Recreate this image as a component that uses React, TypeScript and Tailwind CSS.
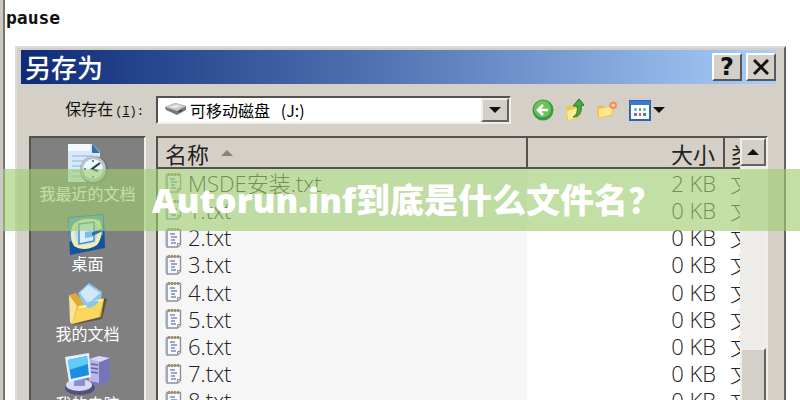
import type { ReactNode } from "react";

type Place = { label: string; icon: ReactNode };

const files = [
  { name: "MSDE安装.txt", size: "2 KB" },
  { name: "1.txt", size: "0 KB" },
  { name: "2.txt", size: "0 KB" },
  { name: "3.txt", size: "0 KB" },
  { name: "4.txt", size: "0 KB" },
  { name: "5.txt", size: "0 KB" },
  { name: "6.txt", size: "0 KB" },
  { name: "7.txt", size: "0 KB" },
  { name: "8.txt", size: "0 KB" },
];

function RecentIcon() {
  return (
    <svg width="44" height="44" viewBox="0 0 44 44" aria-hidden="true">
      <path d="M2 2h24l8 8v30H2z" fill="#d8e8fa" />
      <path d="M2 2h22v7H2z" fill="#f4f9ff" />
      <path d="M26 2l8 9h-8z" fill="#2f6fb5" />
      <path d="M6 14h22M6 19h12M6 24h9M6 29h9M6 34h10" stroke="#b4cdec" strokeWidth="2" />
      <circle cx="28" cy="28" r="14" fill="#686c70" />
      <circle cx="27" cy="27" r="13" fill="#b9c2c8" />
      <circle cx="27" cy="27" r="10" fill="#eef8fc" />
      <path d="M34 21l-8 6 6 2" fill="none" stroke="#23384a" strokeWidth="2" />
      <path d="M27 18v2M18 27h2M27 34v2" stroke="#5b86a0" strokeWidth="2" />
    </svg>
  );
}

function DesktopIcon() {
  return (
    <svg width="44" height="44" viewBox="0 0 44 44" aria-hidden="true">
      <path d="M2 5l36-3 1 34-35 7z" fill="#1553a0" />
      <path d="M3 6l34-3v20L3 30z" fill="#3f92d2" />
      <path d="M7 13c5-7 20-8 27-4 3 8 2 18-3 24-8 5-17 5-23 1-4-6-4-15-1-21z" fill="#f1efb4" />
      <path d="M10 14c6-4 15-5 21-2 2 6 1 13-2 18-6 3-13 3-18 0-3-5-3-11-1-16z" fill="#b9dff0" />
      <path d="M13 12l15-2v19l-15 3z" fill="#d8efff" stroke="#4f8dca" strokeWidth="1.5" />
      <path d="M22 22l13-5 2 2-13 6z" fill="#336f9e" />
      <path d="M19 20l7-1v6l-7 1z" fill="#7bbdf0" />
    </svg>
  );
}

function DocumentsIcon() {
  return (
    <svg width="44" height="44" viewBox="0 0 44 44" aria-hidden="true">
      <path d="M6 43l30-6 5-20-4-1z" fill="#55554d" />
      <path d="M3 13l7-2 4 5 8 1 16-1-3 19-29 7z" fill="#dfa936" />
      <path d="M12 11L23 1l13 9-2 13-15 4z" fill="#8fc4ee" />
      <path d="M14 11l8-8 12 8-12 11z" fill="#cfe9fb" />
      <path d="M3 13l8 11-5 18-2-2z" fill="#f8e49a" />
      <path d="M12 24l9-1 5-4 12-2-5 18-27 7z" fill="#fbd75b" />
      <path d="M13 25l9-1 5-4 9-2" fill="none" stroke="#fff3b0" strokeWidth="2" />
      <path d="M20 22c4-4 8-4 13-3-3 5-8 7-12 7z" fill="#86c8e8" />
    </svg>
  );
}

function ComputerIcon() {
  return (
    <svg width="48" height="44" viewBox="0 0 48 44" aria-hidden="true">
      <path d="M25 7l10-4 11 3v22l-10 6-11-4z" fill="#7774ba" />
      <path d="M25 7l10-3v27l-10-2z" fill="#b9b5e6" />
      <path d="M35 4l11 2-10 4-10-3z" fill="#d9d7f5" />
      <path d="M27 12l7 1M27 16l7 1M27 20l7 1" stroke="#6661a9" strokeWidth="1.5" />
      <ellipse cx="16" cy="36" rx="15" ry="7" fill="#52517e" />
      <ellipse cx="15" cy="33" rx="13" ry="6" fill="#d8daf5" />
      <path d="M10 27h11v7H10z" fill="#8a8fd1" />
      <path d="M1 5l24-4 2 24-22 5z" fill="#e4f2ff" />
      <path d="M4 8l19-4 2 19-18 4z" fill="#1b8ee2" />
      <path d="M4 8l19-4 1 8L5 18z" fill="#63c9f7" />
    </svg>
  );
}

function NotepadIcon() {
  return (
    <svg className="shrink-0" width="17" height="21" viewBox="0 0 17 21" aria-hidden="true">
      <path d="M2 2.5h13.5v15l-3 2.5H2z" fill="#f7f9ff" stroke="#8f9097" strokeWidth="1.4" />
      <path d="M1.5 3v16" stroke="#9aa6bf" strokeWidth="2" />
      <path d="M3 2.5h12" stroke="#a59462" strokeWidth="3" strokeDasharray="2 1" />
      <path d="M5 7h5M6 10h6M6 13h4M6 16h5" stroke="#7f8cb0" strokeWidth="1.3" />
      <path d="M12.5 19.5v-3h3" fill="#d8d8df" stroke="#8f9097" />
    </svg>
  );
}

function DriveIcon() {
  return (
    <svg width="24" height="14" viewBox="0 0 24 14" aria-hidden="true">
      <path d="M1 5l10-4 11 3v4l-9 5L2 8z" fill="#77777a" />
      <path d="M1 5l10-4 11 3-9 5z" fill="#c9c9cc" />
      <path d="M5 5l7-2 5 1-5 2z" fill="#ececef" />
      <path d="M15 10l3-2" stroke="#3c3c3c" strokeWidth="1.5" />
    </svg>
  );
}

function BackIcon() {
  return (
    <svg width="22" height="22" viewBox="0 0 22 22" aria-hidden="true">
      <circle cx="11" cy="11" r="10.5" fill="#3b9c39" />
      <circle cx="10.5" cy="10" r="8.5" fill="#6cc35d" />
      <path d="M16 11H7M11 6l-5 5 5 5" fill="none" stroke="#fff" strokeWidth="2.6" />
    </svg>
  );
}

function UpIcon() {
  return (
    <svg width="20" height="24" viewBox="0 0 20 24" aria-hidden="true">
      <path d="M1 9l5-2 2 2 7-1-1 12-12 3z" fill="#edc94d" />
      <path d="M2 13l10-3-1 10-8 2z" fill="#fbed91" />
      <path d="M8 19c4-2 5-6 4-11H8l6-7 5 6-3 1c1 7-2 11-8 11z" fill="#4aa83c" stroke="#287529" />
    </svg>
  );
}

function NewFolderIcon() {
  return (
    <svg width="22" height="20" viewBox="0 0 23 20" aria-hidden="true">
      <path d="M1 6l6-1 2 2 10-2-2 11-15 3z" fill="#f0bf4e" />
      <path d="M3 9l15-3-2 9-13 3z" fill="#fce68c" />
      <circle cx="18" cy="5" r="4" fill="#ef8f60" />
      <circle cx="18" cy="5" r="1.6" fill="#ffe0a8" />
    </svg>
  );
}

function ViewIcon() {
  return (
    <svg width="22" height="21" viewBox="0 0 22 21" aria-hidden="true">
      <path d="M1 1h20v19H1z" fill="#fff" stroke="#2865b4" strokeWidth="2" />
      <path d="M1 1h20v4H1z" fill="#3b79cd" />
      <path d="M5 8h3v3H5zM14 8h3v3h-3z" fill="#8db4d8" />
      <path d="M10 8h2v3h-2z" fill="#64a07e" />
      <path d="M5 13h3v3H5z" fill="#8a6fb3" />
      <path d="M10 13h2v3h-2z" fill="#d45d5b" />
      <path d="M14 13h3v3h-3z" fill="#4978c5" />
    </svg>
  );
}

function Triangle({ up = false }: { up?: boolean }) {
  return (
    <svg width="12" height="6" viewBox="0 0 12 6" aria-hidden="true">
      <path d={up ? "M0 6L6 0l6 6z" : "M0 0h12L6 6z"} fill="currentColor" />
    </svg>
  );
}

const places: Place[] = [
  { label: "我最近的文档", icon: <RecentIcon /> },
  { label: "桌面", icon: <DesktopIcon /> },
  { label: "我的文档", icon: <DocumentsIcon /> },
  { label: "我的电脑", icon: <ComputerIcon /> },
];

function TitleBar() {
  return (
    <div className="flex h-[34px] items-center justify-between bg-linear-to-r from-[#0f2b78] via-[#5577b5] via-50% to-[#a9cffa] pl-1">
      <h2 className="text-[26px] leading-8 font-medium text-white">另存为</h2>
      <div className="flex gap-1">
        <button
          type="button"
          aria-label="帮助"
          className="flex h-7 w-[30px] items-center justify-center border-2 border-t-white border-r-[#55585e] border-b-[#55585e] border-l-white bg-[#d4d0c8] font-['DejaVu_Sans'] text-2xl leading-6 font-bold"
        >
          ?
        </button>
        <button
          type="button"
          aria-label="关闭"
          className="flex h-7 w-[30px] items-center justify-center border-2 border-t-white border-r-[#55585e] border-b-[#55585e] border-l-white bg-[#d4d0c8]"
        >
          <svg width="16" height="16" viewBox="0 0 16 16" aria-hidden="true">
            <path d="M1 1l14 14M15 1L1 15" stroke="#111" strokeWidth="3" />
          </svg>
        </button>
      </div>
    </div>
  );
}

function Toolbar() {
  return (
    <div className="flex h-[52px] items-center">
      <label htmlFor="folder" className="w-[135px] pr-3 pb-1 text-right text-base">
        保存在
        <span className="pl-0.5 font-['Liberation_Mono'] text-xs">
          (<u>I</u>):
        </span>
      </label>
      <div className="relative h-7 max-w-[355px] flex-1 border-2 border-t-[#55524e] border-r-[#f0eee9] border-b-[#f0eee9] border-l-[#55524e] bg-white">
        <select
          id="folder"
          className="h-full w-full appearance-none pb-px pl-8 text-base leading-6 text-black outline-none"
        >
          <option>可移动磁盘&nbsp;&nbsp; (J:)</option>
        </select>
        <span className="pointer-events-none absolute top-1 left-1.5">
          <DriveIcon />
        </span>
        <span className="pointer-events-none absolute inset-y-0 right-0 flex w-7 items-center justify-center border-2 border-t-[#f0eee9] border-r-[#66635e] border-b-[#66635e] border-l-[#f0eee9] bg-[#d4d0c8]">
          <Triangle />
        </span>
      </div>
      <div className="flex items-center gap-[11px] pl-[21px]">
        <button type="button" aria-label="后退">
          <BackIcon />
        </button>
        <button type="button" aria-label="向上一级">
          <UpIcon />
        </button>
        <button type="button" aria-label="新建文件夹">
          <NewFolderIcon />
        </button>
        <button type="button" aria-label="查看" className="flex items-center gap-0.5">
          <ViewIcon />
          <Triangle />
        </button>
      </div>
    </div>
  );
}

function PlacesBar() {
  return (
    <nav className="w-[117px] shrink-0 border-2 border-t-[#55524e] border-r-[#f0eee9] border-l-[#55524e] bg-[#808080] pt-1">
      {places.map((place) => (
        <a
          key={place.label}
          href="#"
          className="flex h-[70px] flex-col items-center text-base leading-5 whitespace-nowrap text-white"
        >
          <span className="h-[41px]">{place.icon}</span>
          {place.label}
        </a>
      ))}
    </nav>
  );
}

function FileList() {
  return (
    <div className="flex min-w-0 flex-1 border-t-2 border-r-2 border-l-2 border-t-[#55524e] border-r-[#f0eee9] border-l-[#55524e] bg-white">
      <div className="min-w-0 flex-1">
        <table className="h-[276px] w-full table-fixed border-collapse text-[22px] leading-6 text-[#222]">
          <colgroup>
            <col />
            <col className="w-[197px]" />
            <col className="w-4" />
          </colgroup>
          <thead>
            <tr className="h-[30px] border-b-2 border-[#55524e] bg-[#d4d0c8] text-left">
              <th className="border-r-2 border-[#55524e] pl-[7px] font-normal">
                <span className="flex items-center gap-3">
                  名称
                  <span className="text-[#87847e]">
                    <Triangle up />
                  </span>
                </span>
              </th>
              <th className="border-r-2 border-[#55524e] pr-2 text-right font-normal">大小</th>
              <th className="overflow-hidden pl-1.5 font-normal whitespace-nowrap">类型</th>
            </tr>
          </thead>
          <tbody className="font-['Open_Sans','Noto_Sans_CJK_SC',sans-serif] font-light">
            {files.map((file) => (
              <tr key={file.name}>
                <td className="bg-[#f6f6f6] pl-[7px]">
                  <span className="flex items-center gap-1.5">
                    <NotepadIcon />
                    {file.name}
                  </span>
                </td>
                <td className="pr-2 text-right">{file.size}</td>
                <td className="overflow-hidden pl-1.5 whitespace-nowrap">文本文档</td>
              </tr>
            ))}
          </tbody>
        </table>
      </div>
      <div className="flex w-[26px] shrink-0 flex-col bg-[#eeece8]">
        <button
          type="button"
          aria-label="向上滚动"
          className="flex h-7 items-center justify-center border-2 border-t-[#f0eee9] border-r-[#66635e] border-b-[#66635e] border-l-[#f0eee9] bg-[#d4d0c8]"
        >
          <Triangle up />
        </button>
        <div className="mt-[182px] flex-1 border-t-2 border-r-2 border-l-2 border-t-[#f0eee9] border-r-[#66635e] border-l-[#f0eee9] bg-[#d4d0c8]" />
      </div>
    </div>
  );
}

export default function App() {
  return (
    <main className="relative h-screen overflow-hidden border-l-3 border-[#cbc9c2] bg-white font-['Noto_Sans_CJK_SC',sans-serif] text-[#111]">
      <div className="h-full border-l-2 border-[#77756f]">
        <p className="h-[46px] pt-1.5 pl-px font-['DejaVu_Sans_Mono',monospace] text-lg leading-6 font-bold">
          pause
        </p>
        <section className="mr-3.5 ml-2.5 border-t-2 border-r-2 border-l-2 border-t-[#dedbd5] border-r-[#66635e] border-l-[#dedbd5] bg-[#d4d0c8] pt-0.5 pr-2 pl-1">
          <TitleBar />
          <Toolbar />
          <div className="flex gap-2.5 pr-2 pl-2">
            <PlacesBar />
            <FileList />
          </div>
        </section>
      </div>

      {/* Caption band over the dialog */}
      <div className="absolute top-[169px] right-0 -left-[3px] flex h-[62px] items-center justify-center bg-[#9ece72]/63 pl-3.5">
        <h1 className="font-['Open_Sans','Noto_Sans_CJK_SC',sans-serif] text-[34px] leading-10 font-extrabold whitespace-nowrap text-white">
          Autorun.inf到底是什么文件名？
        </h1>
      </div>
    </main>
  );
}
